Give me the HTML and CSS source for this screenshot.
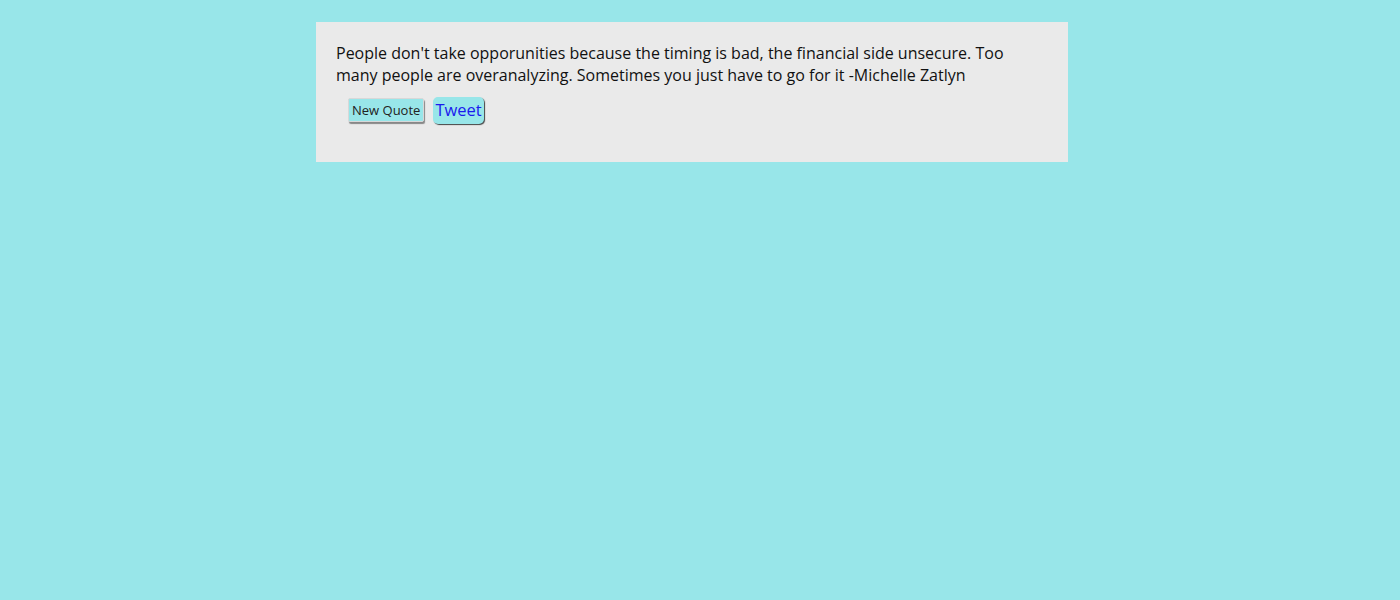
FILE: index.html
```html
<!DOCTYPE html>
<html>
<head>
<meta charset="utf-8">
<link rel="stylesheet" href="styles.css">
</head>
<body>
<div class="card">
  <p class="quote">People don't take opporunities because the timing is bad, the financial side unsecure. Too many people are overanalyzing. Sometimes you just have to go for it -Michelle Zatlyn</p>
  <div class="actions">
    <button class="btn-new">New Quote</button>
    <a class="btn-tweet" href="#">Tweet</a>
  </div>
</div>
</body>
</html>
```
FILE: styles.css
```css
html, body {
  margin: 0;
  padding: 0;
  background: #98e6e9;
  font-family: "Open Sans", "Liberation Sans", sans-serif;
}
.card {
  width: 712px;
  height: 100px;
  margin: 22px 0 0 316px;
  padding: 20px;
  background: #eaeaea;
}
.quote {
  margin: 0;
  font-size: 16px;
  line-height: 22px;
  color: #111;
}
.actions {
  display: flex;
  align-items: flex-end;
  gap: 9px;
  margin-top: 11px;
  padding-left: 12px;
}
.btn-new {
  font-family: "Open Sans", "Liberation Sans", sans-serif;
  font-size: 13px;
  line-height: 18px;
  color: #222;
  background: #98e6e9;
  border: 1px solid #d8d8d8;
  border-radius: 2px;
  padding: 2px 3px;
  margin-bottom: 2px;
  box-shadow: 1px 2px 1px #888;
}
.btn-tweet {
  font-size: 16.5px;
  line-height: 22px;
  color: #1a1aee;
  text-decoration: none;
  background: #98e6e9;
  border-radius: 5px;
  padding: 2px 2px 3px 2px;
  box-shadow: 1px 1px 1px #444;
}
```
